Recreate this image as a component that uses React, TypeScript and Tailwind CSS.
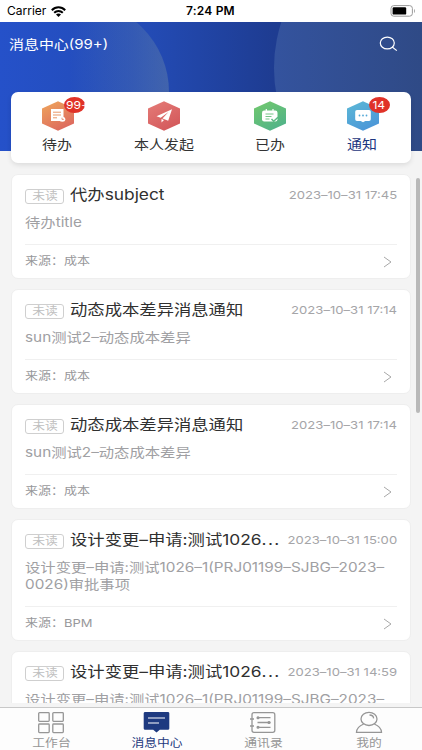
import React from 'react';

type TabKey = 'todo' | 'mine' | 'done' | 'notice';

interface Message {
  title: string;
  truncated?: boolean;
  time: string;
  content: string[];
  source?: string;
}

const messages: Message[] = [
  { title: '代办subject', time: '2023–10–31 17:45', content: ['待办title'], source: '成本' },
  { title: '动态成本差异消息通知', time: '2023–10–31 17:14', content: ['sun测试2–动态成本差异'], source: '成本' },
  { title: '动态成本差异消息通知', time: '2023–10–31 17:14', content: ['sun测试2–动态成本差异'], source: '成本' },
  {
    title: '设计变更–申请:测试1026',
    truncated: true,
    time: '2023–10–31 15:00',
    content: ['设计变更–申请:测试1026–1(PRJ01199–SJBG–2023–', '0026)审批事项'],
    source: 'BPM',
  },
  {
    title: '设计变更–申请:测试1026',
    truncated: true,
    time: '2023–10–31 14:59',
    content: ['设计变更–申请:测试1026–1(PRJ01199–SJBG–2023–'],
  },
];

const tabs: { key: TabKey; label: string; badge?: string; from: string; to: string }[] = [
  { key: 'todo', label: '待办', badge: '99+', from: '#efa75c', to: '#dd6a5e' },
  { key: 'mine', label: '本人发起', from: '#e57c78', to: '#d45a5c' },
  { key: 'done', label: '已办', from: '#73c96c', to: '#52b488' },
  { key: 'notice', label: '通知', badge: '14', from: '#5cb9d6', to: '#4c97d8' },
];

const StatusBar = () => (
  <div className="relative flex h-[22px] shrink-0 items-center justify-between bg-white pl-[7px] pr-[6px] text-black">
    <div className="flex items-center gap-[5px]">
      <span className="text-[12px] leading-[22px]">Carrier</span>
      <svg width="15" height="11" viewBox="0 0 15 11" fill="none" stroke="#000" strokeWidth="2">
        <path d="M0.8 4.2C4.6 0.3 10.4 0.3 14.2 4.2" />
        <path d="M3.2 6.7C5.6 4.3 9.4 4.3 11.8 6.7" />
        <path d="M7.5 10.9L5 8.4C6.4 7.1 8.6 7.1 10 8.4Z" fill="#000" stroke="none" />
      </svg>
    </div>
    <span className="absolute left-[186px] top-0 whitespace-nowrap text-[12px] font-semibold leading-[22px] tracking-[0.2px]">7:24 PM</span>
    <svg width="26" height="12" viewBox="0 0 26 12">
      <rect x="1" y="0.6" width="21.4" height="10.6" rx="2.8" fill="none" stroke="#9a9a9a" />
      <rect x="2.6" y="2.2" width="13.6" height="7.4" rx="1.2" fill="#000" />
      <path d="M24 4v4c1.2-.6 1.2-3.4 0-4z" fill="#9a9a9a" />
    </svg>
  </div>
);

const HeaderBackdrop = () => (
  <svg className="absolute inset-0" width="422" height="129" viewBox="0 0 422 129">
    <defs>
      <linearGradient id="base" x1="0" x2="1" y1="0" y2="0">
        <stop offset="0" stopColor="#2551c9" />
        <stop offset="0.35" stopColor="#234bb5" />
        <stop offset="0.65" stopColor="#1e3c91" />
        <stop offset="1" stopColor="#1d3a8a" />
      </linearGradient>
      <linearGradient id="left" x1="0" x2="1" y1="0" y2="0">
        <stop offset="0.45" stopColor="#7893a8" stopOpacity="0" />
        <stop offset="0.8" stopColor="#7893a8" stopOpacity="0.2" />
        <stop offset="1" stopColor="#7893a8" stopOpacity="0.36" />
      </linearGradient>
      <linearGradient id="right" gradientUnits="userSpaceOnUse" x1="274" x2="422" y1="0" y2="0">
        <stop offset="0" stopColor="#34539e" />
        <stop offset="1" stopColor="#2f4a86" />
      </linearGradient>
    </defs>
    <rect width="422" height="129" fill="url(#base)" />
    <circle cx="78" cy="70" r="91" fill="url(#left)" />
    <circle cx="422" cy="46" r="148" fill="url(#right)" />
  </svg>
);

const TabGlyph = ({ name }: { name: TabKey }) => {
  switch (name) {
    case 'todo':
      return (
        <g>
          <path d="M10 8h12.5v8.5a3.6 3 0 0 0-3.5 3.5H10z" fill="#fff" />
          <path d="M12 11.2h8M12 14h8M12 16.8h4" stroke="#e99767" strokeWidth="1" />
          <ellipse cx="21.3" cy="18.2" rx="3" ry="2.5" fill="#fff" />
          <path d="M21 16.7v1.7h1.8" stroke="#e2805f" strokeWidth="0.8" fill="none" />
        </g>
      );
    case 'mine':
      return (
        <g fill="#fff">
          <path d="M25 8.3L9.5 15.3l4.2 1.5L21.5 11l-6 6.5 5.7 2.2z" />
          <path d="M14.5 18v3.5l2.5-2.4z" />
        </g>
      );
    case 'done':
      return (
        <g>
          <rect x="9" y="9.5" width="15.5" height="11" rx="2.2" fill="#fff" />
          <path d="M13.3 8v3M20 8v3" stroke="#fff" strokeWidth="1.2" />
          <path d="M12.5 13h8M12.5 15.5h6M12.5 18h4" stroke="#64be7a" strokeWidth="0.9" />
          <path d="M18.5 18l2.2 2.2 4.3-4" stroke="#5bb984" strokeWidth="1.5" fill="none" />
        </g>
      );
    case 'notice':
      return (
        <g>
          <path d="M11 9h12a1.8 1.8 0 0 1 1.8 1.8v7.4A1.8 1.8 0 0 1 23 20h-3.7L17 21.3 14.7 20H11a1.8 1.8 0 0 1-1.8-1.8v-7.4A1.8 1.8 0 0 1 11 9z" fill="#fff" />
          <g fill="#53a8d7">
            <circle cx="13.5" cy="14.5" r="0.9" />
            <circle cx="17" cy="14.5" r="0.9" />
            <circle cx="20.5" cy="14.5" r="0.9" />
          </g>
        </g>
      );
  }
};

const TabBar = () => (
  <div className="relative mx-[11px] mt-[5px] h-[71px] rounded-[7px] bg-white shadow-[0_2px_5px_rgba(0,0,0,0.1)]">
    <div className="grid grid-cols-[93px_120px_92px_93px]">
      {tabs.map((tab) => (
        <div key={tab.key} className="flex flex-col items-center pt-[9px]">
          <div className="relative">
            <svg width="34" height="30" viewBox="0 0 34 30">
              <defs>
                <linearGradient id={tab.key} x1="0" y1="0" x2="0.6" y2="1">
                  <stop offset="0" stopColor={tab.from} />
                  <stop offset="1" stopColor={tab.to} />
                </linearGradient>
              </defs>
              <path d="M17 0.3L33 7.5v15L17 29.7 1 22.5v-15z" fill={`url(#${tab.key})`} />
              <TabGlyph name={tab.key} />
            </svg>
            {tab.badge && (
              <span className={`absolute -top-[4px] left-[23px] flex h-4 w-[21px] items-center overflow-hidden rounded-[50%] bg-[#e03228] text-white ${tab.badge.length > 2 ? 'pl-[2px]' : 'justify-center'}`}>
                <span className={`text-[11px] leading-4 ${tab.badge.length > 2 ? 'origin-left scale-x-[1.1]' : 'scale-x-[1.1]'}`}>{tab.badge}</span>
              </span>
            )}
          </div>
          <span className={`mt-[4px] scale-x-[1.15] whitespace-nowrap text-[13px] leading-[18px] ${tab.key === 'notice' ? 'text-[#1d3680]' : 'text-[#333]'}`}>
            {tab.label}
          </span>
        </div>
      ))}
    </div>
  </div>
);

const MessageCard = ({ message }: { message: Message }) => (
  <div className="shrink-0 rounded-[7px] border border-[#eeeeee] bg-white px-[13px]">
    <div className="flex h-[39px] items-center justify-between">
      <div className="flex items-center">
        <span className="mt-[4px] flex h-[15px] w-[39px] items-center justify-center rounded-[3px] border border-[#cfcfcf] text-[#c0c0c0]">
          <span className="scale-x-[1.16] whitespace-nowrap text-[11px] leading-[13px]">未读</span>
        </span>
        <h3 className="ml-[6px] origin-left scale-x-[1.155] whitespace-nowrap text-[15px] leading-5 text-[#303030]">
          {message.title}
          {message.truncated && <span className="tracking-[1.2px]">...</span>}
        </h3>
      </div>
      <span className="origin-right scale-x-[1.19] whitespace-nowrap text-[11px] leading-4 text-[#a5a5a8]">{message.time}</span>
    </div>
    <div className="pb-[13px] text-[#a0a0a3]">
      {message.content.map((line) => (
        <p key={line} className="w-max origin-left scale-x-[1.178] whitespace-nowrap text-[13px] leading-[17px]">{line}</p>
      ))}
    </div>
    <div className="flex h-[34px] items-center justify-between border-t border-[#f0f0f0]">
      {message.source && (
        <span className="origin-left scale-x-[1.18] whitespace-nowrap text-[11px] text-[#98989b]">来源：{message.source}</span>
      )}
      <svg className="ml-auto mr-[5px]" width="9" height="12" viewBox="0 0 9 12" fill="none" stroke="#a8a8a8">
        <path d="M1 1l7 5-7 5" />
      </svg>
    </div>
  </div>
);

const NavItem = ({ label, active, children }: { label: string; active?: boolean; children: React.ReactNode }) => (
  <div className={`flex flex-col items-center pt-[3px] ${active ? 'text-[#1e3a80]' : 'text-[#969696]'}`}>
    <svg width="28" height="23" viewBox="0 0 28 23" fill="none" stroke="currentColor" strokeWidth="1.3">{children}</svg>
    <span className="mt-px scale-x-[1.16] whitespace-nowrap text-[11px] leading-4">{label}</span>
  </div>
);

const BottomNav = () => (
  <nav className="h-[43px] shrink-0 border-t border-[#c8c8c8] bg-[#fdfdfd]">
    <div className="-ml-[2px] grid grid-cols-[106px_106px_106px_106px]">
      <NavItem label="工作台">
        <rect x="1.7" y="1.7" width="10.5" height="8.6" rx="0.8" />
        <rect x="15.8" y="1.7" width="10.5" height="8.6" rx="0.8" />
        <rect x="1.7" y="13" width="10.5" height="8.6" rx="0.8" />
        <rect x="15.8" y="13" width="10.5" height="8.6" rx="0.8" />
      </NavItem>
      <NavItem label="消息中心" active>
        <path d="M2.2 1h22.6a1.5 1.2 0 0 1 1.5 1.2v15.3a1.5 1.2 0 0 1-1.5 1.2h-8L13.5 21.5l-3.3-2.8h-8A1.5 1.2 0 0 1 .7 17.5V2.2A1.5 1.2 0 0 1 2.2 1z" fill="currentColor" stroke="none" />
        <path d="M5 7h17M5 12h11" stroke="#fff" strokeWidth="1.2" />
      </NavItem>
      <NavItem label="通讯录">
        <rect x="3" y="1.7" width="22.8" height="19.6" rx="2" />
        <path d="M1 8h4M1 15h4M8.5 6.7h13M8.5 11.5h13M8.5 16.3h13" />
        <circle cx="9" cy="6.7" r="0.9" fill="currentColor" />
        <circle cx="20" cy="11.5" r="0.9" fill="currentColor" />
        <circle cx="9" cy="16.3" r="0.9" fill="currentColor" />
      </NavItem>
      <NavItem label="我的">
        <ellipse cx="14" cy="7.9" rx="8" ry="6.6" />
        <path d="M14.5 4c2.4.1 4 1.4 4.1 3.4" />
        <path d="M8.7 13C4.2 14.8 1.7 17.5 1.5 21.3h25c-.2-3.8-2.7-6.5-7.2-8.3" />
      </NavItem>
    </div>
  </nav>
);

export default function App() {
  return (
    <div className="flex h-[750px] w-[422px] flex-col overflow-hidden bg-[#f4f4f4] font-[Inter,'Noto_Sans_CJK_SC',sans-serif]">
      <StatusBar />
      <header className="relative h-[129px] shrink-0">
        <HeaderBackdrop />
        <div className="relative flex h-[65px] items-start justify-between pl-[9px] pr-[24px] pt-[12px]">
          <h1 className="origin-left scale-x-[1.15] whitespace-nowrap text-[13px] leading-5 text-white">消息中心(99+)</h1>
          <svg className="mt-[2px]" width="19" height="16" viewBox="0 0 19 16" fill="none" stroke="#fff" strokeWidth="1.2">
            <ellipse cx="8.3" cy="7" rx="7" ry="5.9" />
            <path d="M13.2 11l4.6 3.6" />
          </svg>
        </div>
        <TabBar />
      </header>
      <main className="relative mb-[4px] mt-[23px] flex min-h-0 flex-1 flex-col gap-[10px] overflow-hidden px-[11px]">
        {messages.map((message, index) => (
          <MessageCard key={index} message={message} />
        ))}
        <div className="absolute right-[2px] top-[4px] h-[235px] w-[4px] rounded-full bg-[#b9b9b9]" />
      </main>
      <BottomNav />
    </div>
  );
}
